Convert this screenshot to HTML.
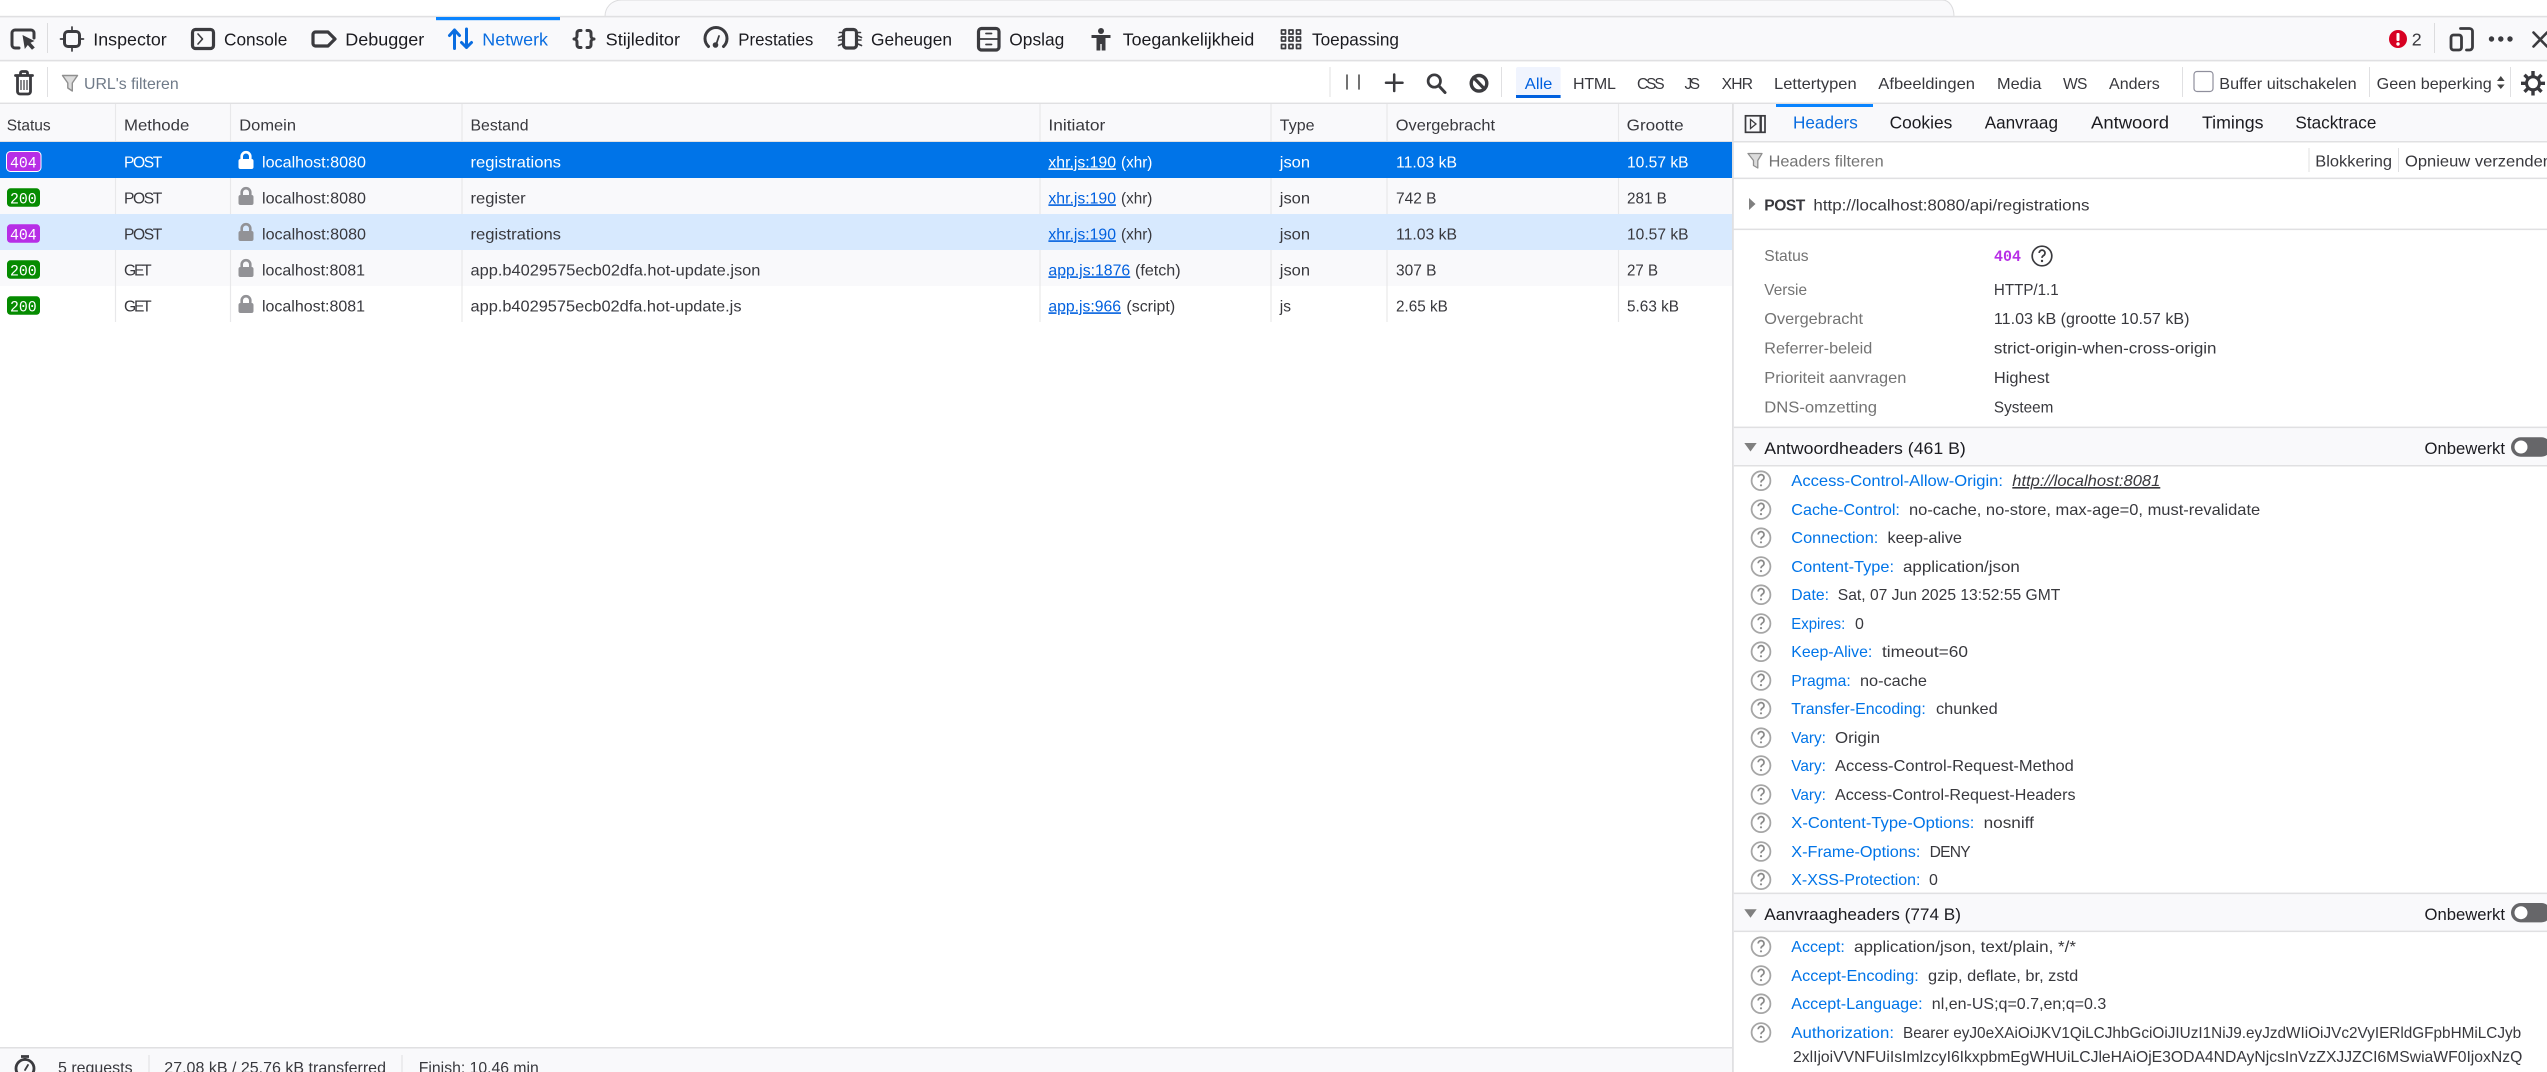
<!DOCTYPE html>
<html lang="nl">
<head>
<meta charset="utf-8">
<title>Netwerk</title>
<style>
html,body{margin:0;padding:0;background:#fff;width:2547px;height:1072px;overflow:hidden}
svg{display:block}
text{font-family:"Liberation Sans",sans-serif;font-size:16px;white-space:pre}
.t{font-size:17.8px}
.c{font-size:15.6px}
.m{font-family:"Liberation Mono",monospace;font-size:16px}
.ic{fill:none;stroke:#3b3b3f;stroke-width:2.4;stroke-linecap:round;stroke-linejoin:round}
.u{text-decoration:underline}
</style>
</head>
<body>
<svg xmlns="http://www.w3.org/2000/svg" width="2547" height="1072" viewBox="0 0 2547 1072">
<defs>
<g id="lock"><rect x="238.5" y="159" width="15" height="10" rx="2" fill="#929296"/><path d="M241.7 160V156.5a4.3 4.3 0 0 1 8.6 0V160" fill="none" stroke="#929296" stroke-width="2.6"/></g>
<g id="lockw"><rect x="238.5" y="159" width="15" height="10" rx="2" fill="#fff"/><path d="M241.7 160V156.5a4.3 4.3 0 0 1 8.6 0V160" fill="none" stroke="#fff" stroke-width="2.6"/></g>
<g id="h"><circle cx="0" cy="0" r="9.4" fill="#fff" stroke="#a6a6a6" stroke-width="1.8"/><path d="M-2.8-3.2a2.9 2.9 0 1 1 4.4 2.500c-1 .6-1.600 1.200-1.600 2.500" fill="none" stroke="#8a8a8a" stroke-width="1.700"/><circle cx="0" cy="4.600" r="1.100" fill="#8a8a8a"/></g>
<g id="tg"><rect x="2511" y="0" width="40" height="19.4" rx="9.7" fill="#666669"/><circle cx="2521" cy="9.7" r="6.5" fill="#fff"/></g>
</defs>

<!-- top strip -->
<rect width="2547" height="16" fill="#fff"/>
<path d="M605 16.5C605 8 611 0 622 0H1942C1950 0 1954 8 1954 16.5Z" fill="#f9f9fb" stroke="#dcdcde" stroke-width="1"/>
<rect y="17" width="2547" height="43" fill="#f9f9fb"/>
<rect y="15.8" width="2547" height="1.6" fill="#e0e0e2"/>
<rect y="59.8" width="2547" height="1.6" fill="#e0e0e2"/>
<rect y="102.6" width="2547" height="1.6" fill="#e0e0e2"/>

<!-- toolbar tabs -->
<rect x="436" y="17" width="124" height="3.2" fill="#0a84ff"/>
<rect x="47" y="23" width="1" height="30" fill="#dcdcde"/>
<rect x="2434" y="23" width="1" height="30" fill="#dcdcde"/>
<g class="ic">
<path stroke-width="3" d="M19 48H15a3 3 0 0 1-3-3V33a3 3 0 0 1 3-3H31a3 3 0 0 1 3 3V38"/>
<rect x="64.500" y="31.500" width="15" height="15" rx="3.500" stroke-width="3"/>
<path stroke-width="1.700" d="M72 27V31M72 47V51M60.500 39H64M80 39H83.500"/>
<rect x="192.500" y="29.500" width="21" height="19" rx="3" stroke-width="3.200"/>
<path stroke-width="1.600" d="M198 34L202.500 39L198 44"/>
<path stroke-width="3.200" d="M315.500 32H328L335 39L328 46H315.500a2.500 2.500 0 0 1-2.500-2.500V34.500a2.500 2.500 0 0 1 2.500-2.500Z"/>
<path stroke-width="3" stroke="#0a6de0" d="M454.500 48.500V30M449.500 35.500L454.500 30L459.500 35.500M466.500 29V47.500M461.500 42.500L466.500 47.500L471.500 42.500"/>
<path stroke-width="3" d="M581 30.500H579.500a2.500 2.500 0 0 0-2.500 2.500v3a3 3 0 0 1-3 3a3 3 0 0 1 3 3v3a2.500 2.500 0 0 0 2.500 2.500H581M587 30.500H588.500a2.500 2.500 0 0 1 2.500 2.500v3a3 3 0 0 0 3 3a3 3 0 0 0-3 3v3a2.500 2.500 0 0 1-2.500 2.500H587"/>
<path stroke-width="3" d="M708.500 46.500A11 11 0 1 1 723.500 46.500"/>
<path stroke-width="1.800" d="M716 45L719 36"/>
<rect x="843.500" y="29.500" width="13" height="18.500" rx="3" stroke-width="3.200"/>
<path stroke-width="1.600" d="M842 32.500H839.500M842 36L838.500 37.500M842 40H839M842 44L838.500 45.500M858 32.500H860.500M858 36L861.500 37.500M858 40H861M858 44L861.500 45.500"/>
<rect x="978.500" y="28.500" width="20.500" height="21.500" rx="3" stroke-width="3.200"/>
<path stroke-width="1.800" d="M979 39H999M986 33.500H991.500M986 44.500H991.500"/>
<path stroke-width="1.700" d="M1281.500 30h4v4h-4zM1289 30h4v4h-4zM1296.500 30h4v4h-4zM1281.500 37h4v4h-4zM1289 37h4v4h-4zM1296.500 37h4v4h-4zM1281.500 44.500h4v4h-4zM1289 44.500h4v4h-4zM1296.500 44.500h4v4h-4z"/>
<path stroke-width="2.800" d="M2460.500 28.500H2469.500a3 3 0 0 1 3 3V47a3 3 0 0 1-3 3H2466.500"/>
<rect x="2451" y="35" width="10.500" height="15" rx="2.500" stroke-width="2.800"/>
<path stroke-width="2.600" d="M2533.500 32.500L2547 46.500M2547 32.500L2533.500 46.500"/>
</g>
<path d="M22.500 35L34.500 41L30.500 42.800L34.800 47.500L32 49.800L27.800 45L24.800 49Z" fill="#3b3b3f"/>
<g fill="#3b3b3f">
<circle cx="715.500" cy="45" r="2.800"/>
<circle cx="1101" cy="31" r="3"/>
<path d="M1091.500 35H1110.500V38H1105.500V50.500H1101.700V44H1100.300V50.500H1096.500V38H1091.500Z"/>
<circle cx="2491.500" cy="39" r="2.700"/><circle cx="2500.800" cy="39" r="2.700"/><circle cx="2510" cy="39" r="2.700"/>
</g>
<circle cx="2398" cy="39" r="9" fill="#d70022"/>
<rect x="2396.500" y="33" width="3" height="8" rx="1" fill="#fff"/><circle cx="2398" cy="44" r="1.700" fill="#fff"/>

<g class="t" fill="#1b1b20">
<text class="t" x="93.300" y="45.500" textLength="73.400" lengthAdjust="spacingAndGlyphs">Inspector</text>
<text class="t" x="224" y="45.500" textLength="63.300" lengthAdjust="spacingAndGlyphs">Console</text>
<text class="t" x="345.300" y="45.500" textLength="79" lengthAdjust="spacingAndGlyphs">Debugger</text>
<text class="t" x="482.300" y="45.500" textLength="65.700" lengthAdjust="spacingAndGlyphs" fill="#0a6de0">Netwerk</text>
<text class="t" x="605.700" y="45.500" textLength="74.300" lengthAdjust="spacingAndGlyphs">Stijleditor</text>
<text class="t" x="738.300" y="45.500" textLength="75" lengthAdjust="spacingAndGlyphs">Prestaties</text>
<text class="t" x="871" y="45.500" textLength="81" lengthAdjust="spacingAndGlyphs">Geheugen</text>
<text class="t" x="1009.300" y="45.500" textLength="55" lengthAdjust="spacingAndGlyphs">Opslag</text>
<text class="t" x="1122.700" y="45.500" textLength="131.600" lengthAdjust="spacingAndGlyphs">Toegankelijkheid</text>
<text class="t" x="1312" y="45.500" textLength="87" lengthAdjust="spacingAndGlyphs">Toepassing</text>
<text class="t" x="2411.700" y="45.500" fill="#38383d">2</text>
</g>

<!-- filter bar -->
<rect x="47" y="67" width="1" height="30" fill="#e0e0e2"/>
<rect x="1329.500" y="67" width="1" height="30" fill="#e0e0e2"/>
<rect x="1501" y="67" width="1" height="30" fill="#e0e0e2"/>
<rect x="2182" y="67" width="1" height="30" fill="#e0e0e2"/>
<rect x="2369" y="67" width="1" height="30" fill="#e0e0e2"/>
<rect x="2510" y="67" width="1" height="30" fill="#e0e0e2"/>
<g class="ic">
<path stroke-width="2.800" d="M15.500 75.500H32.500M20.500 75V73a1.500 1.500 0 0 1 1.500-1.500h4a1.500 1.500 0 0 1 1.500 1.500V75M17.500 76V91.500a2.500 2.500 0 0 0 2.500 2.500h8a2.500 2.500 0 0 0 2.500-2.500V76"/>
<path stroke-width="1.200" stroke-linecap="butt" d="M21 80V90M24 80V90M27 80V90"/>
<path stroke-width="2.500" d="M1386 82.700H1402.500M1394.200 74.500V91"/>
<circle cx="1434.300" cy="81" r="6.200" stroke-width="2.700"/>
<path stroke-width="3" d="M1439 86L1445 92.500"/>
<circle cx="1479" cy="83.300" r="7.800" stroke-width="3.400"/>
<path stroke-width="3.200" d="M1473.500 77.500L1484.500 89"/>
<path stroke-width="1.500" stroke="#444" d="M1347 75V89M1359 75V89"/>
</g>
<path d="M62.500 75.500H77.500L72.300 83V91L67.800 88V83Z" fill="#dcdcdc" stroke="#8f8f8f" stroke-width="1.400" stroke-linejoin="round"/>
<text x="84" y="89" textLength="94.700" lengthAdjust="spacingAndGlyphs" fill="#6f7a88">URL's filteren</text>

<rect x="1516" y="67" width="44.600" height="31" rx="2" fill="#f0f4fe"/>
<rect x="1516" y="95" width="44.600" height="3" fill="#0060df"/>
<g fill="#38383d">
<text x="1524.800" y="89" textLength="27.600" lengthAdjust="spacingAndGlyphs" fill="#0060df">Alle</text>
<text x="1573" y="89" textLength="42.900">HTML</text>
<text class="c" x="1637" y="89" textLength="27.600">CSS</text>
<text class="c" x="1684.500" y="89" textLength="15.500">JS</text>
<text class="c" x="1721.600" y="89" textLength="31.400">XHR</text>
<text x="1774" y="89" textLength="82.700" lengthAdjust="spacingAndGlyphs">Lettertypen</text>
<text x="1878.300" y="89" textLength="96.700" lengthAdjust="spacingAndGlyphs">Afbeeldingen</text>
<text x="1997" y="89" textLength="44.400" lengthAdjust="spacingAndGlyphs">Media</text>
<text class="c" x="2063" y="89" textLength="24.400">WS</text>
<text x="2109" y="89" textLength="50.800" lengthAdjust="spacingAndGlyphs">Anders</text>
<text x="2219.300" y="89" textLength="137.400" lengthAdjust="spacingAndGlyphs">Buffer uitschakelen</text>
<text x="2376.700" y="89" textLength="115" lengthAdjust="spacingAndGlyphs">Geen beperking</text>
</g>
<rect x="2194" y="71.500" width="19" height="20" rx="3" fill="#fff" stroke="#8f8f9d" stroke-width="1.200"/>
<path d="M2497 81L2500.800 76L2504.600 81ZM2497 84.500L2500.800 89L2504.600 84.500Z" fill="#444"/>
<g stroke="#38383d" stroke-width="3.400">
<path d="M2533 71V95.500M2521 83.300H2545M2524.500 74.800L2541.500 91.800M2541.500 74.800L2524.500 91.800"/>
</g>
<circle cx="2533" cy="83.300" r="6.500" fill="#fff" stroke="#38383d" stroke-width="3"/>

<!-- table -->
<rect y="104" width="1732" height="38" fill="#f9f9fb"/>
<rect y="141" width="1732" height="1.500" fill="#e0e0e2"/>
<rect y="142" width="1732" height="36" fill="#0074e8"/>
<rect y="178" width="1732" height="36" fill="#f9f9fb"/>
<rect y="214" width="1732" height="36" fill="#d7e9fe"/>
<rect y="250" width="1732" height="36" fill="#f9f9fb"/>
<rect y="286" width="1732" height="36" fill="#fff"/>
<path d="M115.500 104V141M230.500 104V141M462 104V141M1040 104V141M1271 104V141M1387 104V141M1618.500 104V141M115.500 178V214M230.500 178V214M462 178V214M1040 178V214M1271 178V214M1387 178V214M1618.500 178V214M115.500 250V322M230.500 250V322M462 250V322M1040 250V322M1271 250V322M1387 250V322M1618.500 250V322" stroke="#e8e8ea" stroke-width="1.200" fill="none"/>

<g fill="#38383d">
<text x="6.700" y="130.700" textLength="44" lengthAdjust="spacingAndGlyphs">Status</text>
<text x="124" y="130.700" textLength="65.300" lengthAdjust="spacingAndGlyphs">Methode</text>
<text x="239.300" y="130.700" textLength="56.700" lengthAdjust="spacingAndGlyphs">Domein</text>
<text x="470.500" y="130.700" textLength="58" lengthAdjust="spacingAndGlyphs">Bestand</text>
<text x="1048.400" y="130.700" textLength="56.900" lengthAdjust="spacingAndGlyphs">Initiator</text>
<text x="1279.800" y="130.700" textLength="34.700" lengthAdjust="spacingAndGlyphs">Type</text>
<text x="1395.800" y="130.700" textLength="99.200" lengthAdjust="spacingAndGlyphs">Overgebracht</text>
<text x="1626.700" y="130.700" textLength="56.900" lengthAdjust="spacingAndGlyphs">Grootte</text>
</g>

<!-- badges -->
<rect x="6.500" y="151.500" width="34.500" height="20" rx="4" fill="#b72ee6" stroke="#fff" stroke-width="1"/>
<rect x="7" y="188.300" width="33" height="18.500" rx="3.500" fill="#058b00"/>
<rect x="7" y="224.300" width="33" height="18.500" rx="3.500" fill="#b72ee6"/>
<rect x="7" y="260.300" width="33" height="18.500" rx="3.500" fill="#058b00"/>
<rect x="7" y="296.300" width="33" height="18.500" rx="3.500" fill="#058b00"/>
<g fill="#fff">
<text class="m" x="10" y="167.300" textLength="26.700" lengthAdjust="spacingAndGlyphs">404</text>
<text class="m" x="10" y="203.300" textLength="26.700" lengthAdjust="spacingAndGlyphs">200</text>
<text class="m" x="10" y="239.300" textLength="26.700" lengthAdjust="spacingAndGlyphs">404</text>
<text class="m" x="10" y="275.300" textLength="26.700" lengthAdjust="spacingAndGlyphs">200</text>
<text class="m" x="10" y="311.300" textLength="26.700" lengthAdjust="spacingAndGlyphs">200</text>
</g>
<use href="#lockw"/>
<use href="#lock" y="36"/><use href="#lock" y="72"/><use href="#lock" y="108"/><use href="#lock" y="144"/>

<!-- row 1 -->
<g fill="#fff">
<text class="c" x="124" y="167.300" textLength="38.300">POST</text>
<text x="262" y="167.300" textLength="104" lengthAdjust="spacingAndGlyphs">localhost:8080</text>
<text x="470.500" y="167.300" textLength="90.500" lengthAdjust="spacingAndGlyphs">registrations</text>
<text class="u" x="1048.400" y="167.300" textLength="67.600" lengthAdjust="spacingAndGlyphs">xhr.js:190</text>
<text x="1121" y="167.300" textLength="31.400" lengthAdjust="spacingAndGlyphs">(xhr)</text>
<text x="1279.800" y="167.300" textLength="30.200" lengthAdjust="spacingAndGlyphs">json</text>
<text x="1396" y="167.300" textLength="61" lengthAdjust="spacingAndGlyphs">11.03 kB</text>
<text x="1627" y="167.300" textLength="61.500" lengthAdjust="spacingAndGlyphs">10.57 kB</text>
</g>
<!-- other rows -->
<g fill="#38383d">
<text class="c" x="124" y="203.300" textLength="38.300">POST</text>
<text x="262" y="203.300" textLength="104" lengthAdjust="spacingAndGlyphs">localhost:8080</text>
<text x="470.500" y="203.300" textLength="55.200" lengthAdjust="spacingAndGlyphs">register</text>
<text class="u" x="1048.400" y="203.300" textLength="67.600" lengthAdjust="spacingAndGlyphs" fill="#0060df">xhr.js:190</text>
<text x="1121" y="203.300" textLength="31.400" lengthAdjust="spacingAndGlyphs">(xhr)</text>
<text x="1279.800" y="203.300" textLength="30.200" lengthAdjust="spacingAndGlyphs">json</text>
<text x="1396" y="203.300" textLength="40.500" lengthAdjust="spacingAndGlyphs">742 B</text>
<text x="1627" y="203.300" textLength="39.800" lengthAdjust="spacingAndGlyphs">281 B</text>

<text class="c" x="124" y="239.300" textLength="38.300">POST</text>
<text x="262" y="239.300" textLength="104" lengthAdjust="spacingAndGlyphs">localhost:8080</text>
<text x="470.500" y="239.300" textLength="90.500" lengthAdjust="spacingAndGlyphs">registrations</text>
<text class="u" x="1048.400" y="239.300" textLength="67.600" lengthAdjust="spacingAndGlyphs" fill="#0060df">xhr.js:190</text>
<text x="1121" y="239.300" textLength="31.400" lengthAdjust="spacingAndGlyphs">(xhr)</text>
<text x="1279.800" y="239.300" textLength="30.200" lengthAdjust="spacingAndGlyphs">json</text>
<text x="1396" y="239.300" textLength="61" lengthAdjust="spacingAndGlyphs">11.03 kB</text>
<text x="1627" y="239.300" textLength="61.500" lengthAdjust="spacingAndGlyphs">10.57 kB</text>

<text class="c" x="124" y="275.300" textLength="27.700">GET</text>
<text x="262" y="275.300" textLength="103" lengthAdjust="spacingAndGlyphs">localhost:8081</text>
<text x="470.500" y="275.300" textLength="289.900" lengthAdjust="spacingAndGlyphs">app.b4029575ecb02dfa.hot-update.json</text>
<text class="u" x="1048.400" y="275.300" textLength="81.800" lengthAdjust="spacingAndGlyphs" fill="#0060df">app.js:1876</text>
<text x="1135" y="275.300" textLength="45.600" lengthAdjust="spacingAndGlyphs">(fetch)</text>
<text x="1279.800" y="275.300" textLength="30.200" lengthAdjust="spacingAndGlyphs">json</text>
<text x="1396" y="275.300" textLength="40.500" lengthAdjust="spacingAndGlyphs">307 B</text>
<text x="1627" y="275.300" textLength="31" lengthAdjust="spacingAndGlyphs">27 B</text>

<text class="c" x="124" y="311.300" textLength="27.700">GET</text>
<text x="262" y="311.300" textLength="103" lengthAdjust="spacingAndGlyphs">localhost:8081</text>
<text x="470.500" y="311.300" textLength="271" lengthAdjust="spacingAndGlyphs">app.b4029575ecb02dfa.hot-update.js</text>
<text class="u" x="1048.400" y="311.300" textLength="72.600" lengthAdjust="spacingAndGlyphs" fill="#0060df">app.js:966</text>
<text x="1126.400" y="311.300" textLength="48.800" lengthAdjust="spacingAndGlyphs">(script)</text>
<text x="1279.800" y="311.300" textLength="11.200" lengthAdjust="spacingAndGlyphs">js</text>
<text x="1396" y="311.300" textLength="51.800" lengthAdjust="spacingAndGlyphs">2.65 kB</text>
<text x="1627" y="311.300" textLength="52" lengthAdjust="spacingAndGlyphs">5.63 kB</text>
</g>

<!-- status bar -->
<rect y="1048" width="1732" height="24" fill="#f9f9fb"/>
<rect y="1047" width="1732" height="1.500" fill="#e0e0e2"/>
<rect x="148.500" y="1055" width="1" height="17" fill="#e0e0e2"/>
<rect x="401.500" y="1055" width="1" height="17" fill="#e0e0e2"/>
<g class="ic">
<circle cx="25" cy="1068.500" r="9" stroke-width="2.800"/>
<path stroke-width="2.800" stroke-linecap="butt" d="M21 1056.500H29M25 1058V1060"/>
<path stroke-width="1.800" d="M25 1070L28 1065"/>
</g>
<g fill="#38383d">
<text x="58" y="1073" textLength="74.600" lengthAdjust="spacingAndGlyphs">5 requests</text>
<text x="164.300" y="1073" textLength="221.700" lengthAdjust="spacingAndGlyphs">27.08 kB / 25.76 kB transferred</text>
<text x="418.800" y="1073" textLength="120" lengthAdjust="spacingAndGlyphs">Finish: 10.46 min</text>
</g>

<!-- right panel -->
<rect x="1733" y="104" width="814" height="38" fill="#f9f9fb"/>
<rect x="1732" y="104" width="1.800" height="968" fill="#e0e0e2"/>
<rect x="1733" y="141" width="814" height="1.500" fill="#e0e0e2"/>
<rect x="1733" y="177.600" width="814" height="1.500" fill="#e0e0e2"/>
<rect x="1733" y="228.600" width="814" height="1.500" fill="#e0e0e2"/>
<rect x="1776" y="104" width="97" height="3" fill="#0a84ff"/>
<rect x="1745.500" y="115.800" width="19.500" height="16.500" fill="none" stroke="#3b3b3f" stroke-width="1.700"/>
<rect x="1759.500" y="116" width="2.400" height="16" fill="#3b3b3f"/>
<path d="M1750.500 119.500L1756 124L1750.500 128.500Z" fill="none" stroke="#3b3b3f" stroke-width="1.300"/>
<g fill="#1b1b20">
<text class="t" x="1793" y="128.300" textLength="64.800" lengthAdjust="spacingAndGlyphs" fill="#0a6de0">Headers</text>
<text class="t" x="1889.600" y="128.300" textLength="62.700" lengthAdjust="spacingAndGlyphs">Cookies</text>
<text class="t" x="1984.700" y="128.300" textLength="73.300" lengthAdjust="spacingAndGlyphs">Aanvraag</text>
<text class="t" x="2091" y="128.300" textLength="78" lengthAdjust="spacingAndGlyphs">Antwoord</text>
<text class="t" x="2202" y="128.300" textLength="61.500" lengthAdjust="spacingAndGlyphs">Timings</text>
<text class="t" x="2295.400" y="128.300" textLength="81" lengthAdjust="spacingAndGlyphs">Stacktrace</text>
</g>
<path d="M1748 153.500H1762L1757.800 160.500V168L1753.500 165.500V160.500Z" fill="#dcdcdc" stroke="#8f8f8f" stroke-width="1.300" stroke-linejoin="round"/>
<text x="1768.600" y="166.700" textLength="115.100" lengthAdjust="spacingAndGlyphs" fill="#737373">Headers filteren</text>
<rect x="2308.500" y="148" width="1" height="24" fill="#e0e0e2"/>
<rect x="2398" y="148" width="1" height="24" fill="#e0e0e2"/>
<g fill="#38383d">
<text x="2315.300" y="166.700" textLength="76.700" lengthAdjust="spacingAndGlyphs">Blokkering</text>
<text x="2405" y="166.700" textLength="147" lengthAdjust="spacingAndGlyphs">Opnieuw verzenden</text>
</g>

<path d="M1749 198L1755.500 204L1749 210Z" fill="#808080"/>
<text class="c" x="1764.300" y="210.700" textLength="41" font-weight="bold" fill="#38383d">POST</text>
<text x="1813.400" y="210.700" textLength="276.100" lengthAdjust="spacingAndGlyphs" fill="#38383d">http://localhost:8080/api/registrations</text>

<g fill="#737373">
<text x="1764.300" y="261" textLength="44.300" lengthAdjust="spacingAndGlyphs">Status</text>
<text x="1764.300" y="295" textLength="42.700" lengthAdjust="spacingAndGlyphs">Versie</text>
<text x="1764.300" y="324" textLength="98.700" lengthAdjust="spacingAndGlyphs">Overgebracht</text>
<text x="1764.300" y="353.500" textLength="108" lengthAdjust="spacingAndGlyphs">Referrer-beleid</text>
<text x="1764.300" y="383" textLength="142.100" lengthAdjust="spacingAndGlyphs">Prioriteit aanvragen</text>
<text x="1764.300" y="412.500" textLength="112.700" lengthAdjust="spacingAndGlyphs">DNS-omzetting</text>
</g>
<text class="m" x="1994" y="261" font-weight="bold" fill="#b72ee6" textLength="27" lengthAdjust="spacingAndGlyphs">404</text>
<circle cx="2042" cy="256" r="9.800" fill="#fff" stroke="#3b3b3f" stroke-width="1.700"/>
<path d="M2039.200 253a2.900 2.900 0 1 1 4.400 2.500c-1 .6-1.600 1.200-1.600 2.400" fill="none" stroke="#3b3b3f" stroke-width="1.700"/>
<circle cx="2042" cy="261" r="1.200" fill="#3b3b3f"/>
<g fill="#38383d">
<text x="1993.900" y="295" textLength="64.800" lengthAdjust="spacingAndGlyphs">HTTP/1.1</text>
<text x="1993.900" y="324" textLength="195.600" lengthAdjust="spacingAndGlyphs">11.03 kB (grootte 10.57 kB)</text>
<text x="1993.900" y="353.500" textLength="222.600" lengthAdjust="spacingAndGlyphs">strict-origin-when-cross-origin</text>
<text x="1993.900" y="383" textLength="55.600" lengthAdjust="spacingAndGlyphs">Highest</text>
<text x="1993.900" y="412.500" textLength="59.400" lengthAdjust="spacingAndGlyphs">Systeem</text>
</g>

<!-- section 1 -->
<rect x="1733.800" y="427" width="814" height="39" fill="#f9f9fb"/>
<rect x="1733.800" y="426.600" width="814" height="1.500" fill="#e0e0e2"/>
<rect x="1733.800" y="465" width="814" height="1.500" fill="#e0e0e2"/>
<path d="M1744.300 443H1756.700L1750.500 451.500Z" fill="#808080"/>
<text x="1764.300" y="454" style="font-size:17px" textLength="201.500" lengthAdjust="spacingAndGlyphs" fill="#1b1b20">Antwoordheaders (461 B)</text>
<text x="2424.500" y="454" style="font-size:17px" textLength="80.500" lengthAdjust="spacingAndGlyphs" fill="#1b1b20">Onbewerkt</text>
<use href="#tg" y="437.300"/>

<!-- section 2 -->
<rect x="1733.800" y="894" width="814" height="38" fill="#f9f9fb"/>
<rect x="1733.800" y="892.600" width="814" height="1.500" fill="#e0e0e2"/>
<rect x="1733.800" y="930.600" width="814" height="1.500" fill="#e0e0e2"/>
<path d="M1744.300 909.300H1756.700L1750.500 917.800Z" fill="#808080"/>
<text x="1764.300" y="920" style="font-size:17px" textLength="196.700" lengthAdjust="spacingAndGlyphs" fill="#1b1b20">Aanvraagheaders (774 B)</text>
<text x="2424.500" y="920" style="font-size:17px" textLength="80.500" lengthAdjust="spacingAndGlyphs" fill="#1b1b20">Onbewerkt</text>
<use href="#tg" y="903"/>

<!-- help icons -->
<use href="#h" x="1761" y="480.700"/><use href="#h" x="1761" y="509.500"/><use href="#h" x="1761" y="537.700"/><use href="#h" x="1761" y="566.500"/><use href="#h" x="1761" y="594.700"/><use href="#h" x="1761" y="623.500"/><use href="#h" x="1761" y="651.700"/><use href="#h" x="1761" y="680.500"/><use href="#h" x="1761" y="708.700"/><use href="#h" x="1761" y="737.700"/><use href="#h" x="1761" y="765.500"/><use href="#h" x="1761" y="794.500"/><use href="#h" x="1761" y="822.700"/><use href="#h" x="1761" y="851.500"/><use href="#h" x="1761" y="879.700"/><use href="#h" x="1761" y="946.700"/><use href="#h" x="1761" y="975.500"/><use href="#h" x="1761" y="1003.700"/><use href="#h" x="1761" y="1032.500"/>

<!-- header names -->
<g fill="#0074e8">
<text x="1791.300" y="486" textLength="211.700" lengthAdjust="spacingAndGlyphs">Access-Control-Allow-Origin:</text>
<text x="1791.300" y="515" textLength="108.600" lengthAdjust="spacingAndGlyphs">Cache-Control:</text>
<text x="1791.300" y="543" textLength="87" lengthAdjust="spacingAndGlyphs">Connection:</text>
<text x="1791.300" y="572" textLength="102.700" lengthAdjust="spacingAndGlyphs">Content-Type:</text>
<text x="1791.300" y="600" textLength="37.700" lengthAdjust="spacingAndGlyphs">Date:</text>
<text x="1791.300" y="629" textLength="54" lengthAdjust="spacingAndGlyphs">Expires:</text>
<text x="1791.300" y="657" textLength="81" lengthAdjust="spacingAndGlyphs">Keep-Alive:</text>
<text x="1791.300" y="686" textLength="59.400" lengthAdjust="spacingAndGlyphs">Pragma:</text>
<text x="1791.300" y="714" textLength="134.500" lengthAdjust="spacingAndGlyphs">Transfer-Encoding:</text>
<text x="1791.300" y="743" textLength="34.600" lengthAdjust="spacingAndGlyphs">Vary:</text>
<text x="1791.300" y="771" textLength="34.600" lengthAdjust="spacingAndGlyphs">Vary:</text>
<text x="1791.300" y="800" textLength="34.600" lengthAdjust="spacingAndGlyphs">Vary:</text>
<text x="1791.300" y="828" textLength="183.100" lengthAdjust="spacingAndGlyphs">X-Content-Type-Options:</text>
<text x="1791.300" y="857" textLength="129.100" lengthAdjust="spacingAndGlyphs">X-Frame-Options:</text>
<text x="1791.300" y="885" textLength="129.100" lengthAdjust="spacingAndGlyphs">X-XSS-Protection:</text>
<text x="1791.300" y="952" textLength="53.500" lengthAdjust="spacingAndGlyphs">Accept:</text>
<text x="1791.300" y="981" textLength="127.500" lengthAdjust="spacingAndGlyphs">Accept-Encoding:</text>
<text x="1791.300" y="1009" textLength="131.300" lengthAdjust="spacingAndGlyphs">Accept-Language:</text>
<text x="1791.300" y="1038" textLength="102.700" lengthAdjust="spacingAndGlyphs">Authorization:</text>
</g>
<!-- header values -->
<g fill="#38383d">
<text class="u" x="2012.300" y="486" textLength="148" lengthAdjust="spacingAndGlyphs" font-style="italic">http://localhost:8081</text>
<text x="1909" y="515" textLength="351.200" lengthAdjust="spacingAndGlyphs">no-cache, no-store, max-age=0, must-revalidate</text>
<text x="1887.500" y="543" textLength="74.500" lengthAdjust="spacingAndGlyphs">keep-alive</text>
<text x="1903" y="572" textLength="116.800" lengthAdjust="spacingAndGlyphs">application/json</text>
<text x="1837.800" y="600" textLength="222.500" lengthAdjust="spacingAndGlyphs">Sat, 07 Jun 2025 13:52:55 GMT</text>
<text x="1855" y="629">0</text>
<text x="1882" y="657" textLength="86" lengthAdjust="spacingAndGlyphs">timeout=60</text>
<text x="1860" y="686" textLength="67" lengthAdjust="spacingAndGlyphs">no-cache</text>
<text x="1936" y="714" textLength="61.700" lengthAdjust="spacingAndGlyphs">chunked</text>
<text x="1835" y="743" textLength="45" lengthAdjust="spacingAndGlyphs">Origin</text>
<text x="1835" y="771" textLength="238.800" lengthAdjust="spacingAndGlyphs">Access-Control-Request-Method</text>
<text x="1835" y="800" textLength="240.500" lengthAdjust="spacingAndGlyphs">Access-Control-Request-Headers</text>
<text x="1983.600" y="828" textLength="50.300" lengthAdjust="spacingAndGlyphs">nosniff</text>
<text class="c" x="1929.600" y="857" textLength="41.100">DENY</text>
<text x="1929" y="885">0</text>
<text x="1854" y="952" textLength="222" lengthAdjust="spacingAndGlyphs">application/json, text/plain, */*</text>
<text x="1928" y="981" textLength="150.200" lengthAdjust="spacingAndGlyphs">gzip, deflate, br, zstd</text>
<text x="1931.800" y="1009" textLength="174.500" lengthAdjust="spacingAndGlyphs">nl,en-US;q=0.7,en;q=0.3</text>
<text x="1903" y="1038" textLength="618.200" lengthAdjust="spacingAndGlyphs">Bearer eyJ0eXAiOiJKV1QiLCJhbGciOiJIUzI1NiJ9.eyJzdWIiOiJVc2VyIERldGFpbHMiLCJyb</text>
<text x="1793" y="1062" textLength="729.300" lengthAdjust="spacingAndGlyphs">2xlIjoiVVNFUiIsImlzcyI6IkxpbmEgWHUiLCJleHAiOjE3ODA4NDAyNjcsInVzZXJJZCI6MSwiaWF0IjoxNzQ</text>
</g>
</svg>
</body>
</html>
